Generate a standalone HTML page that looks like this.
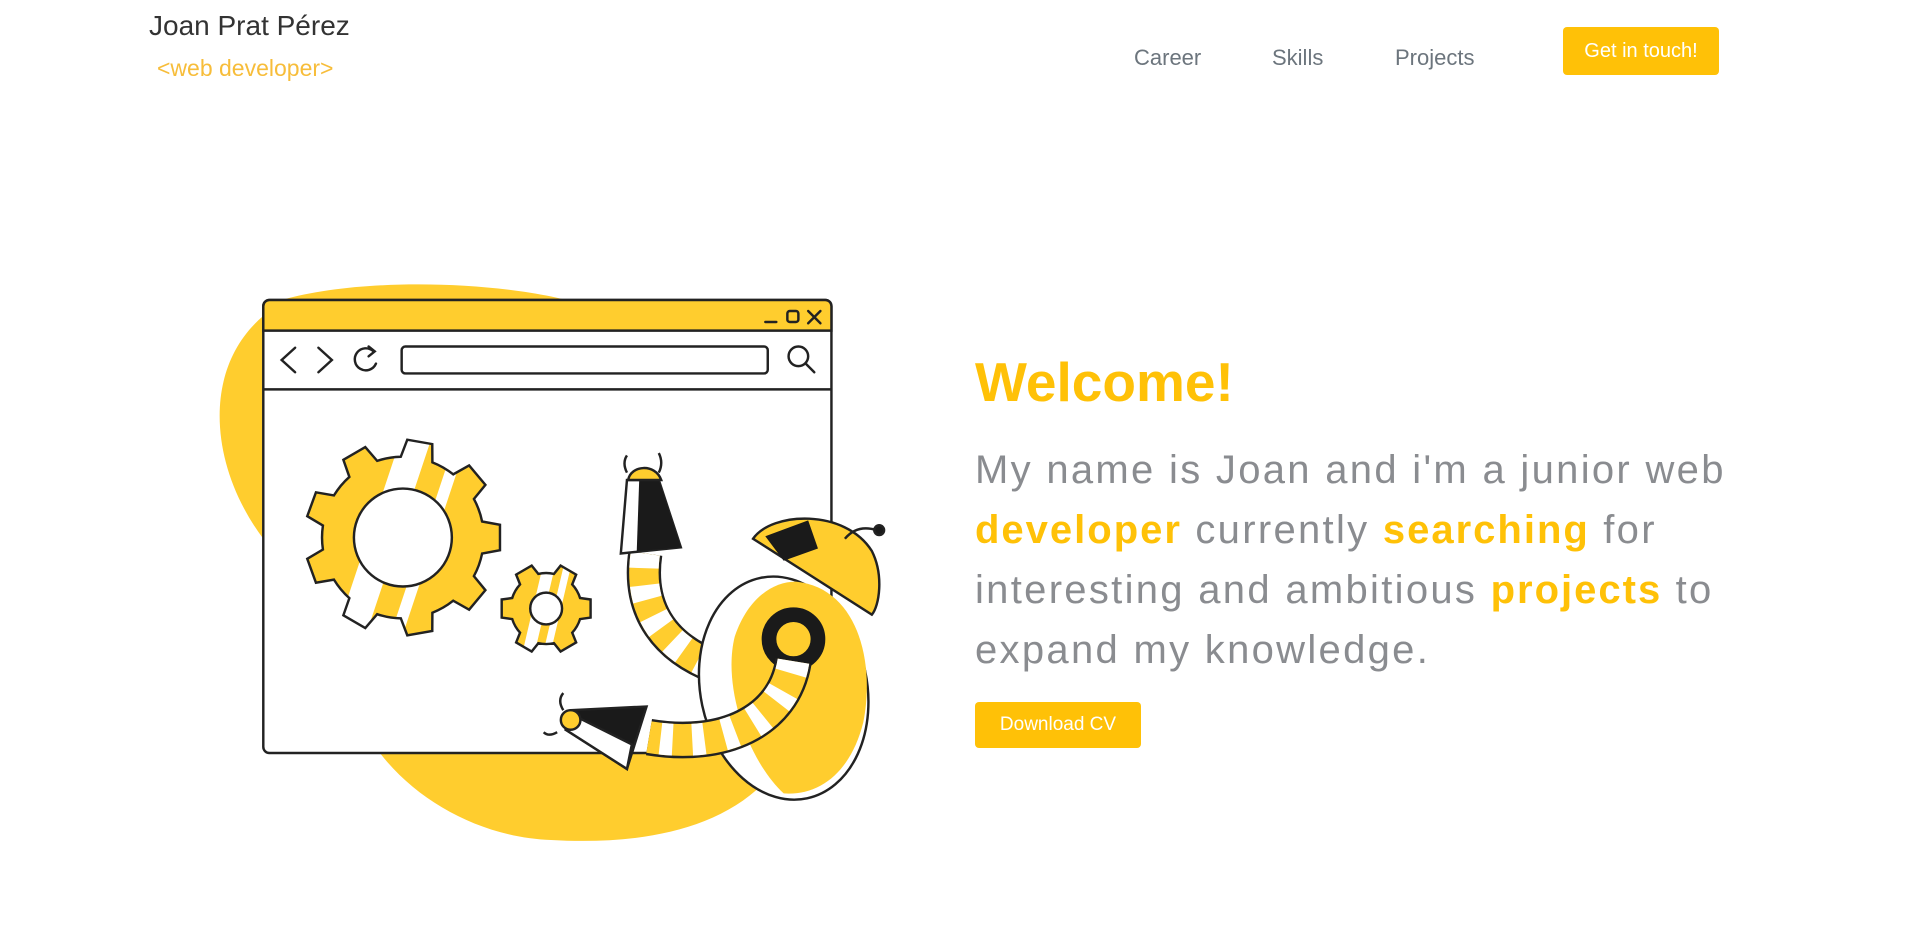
<!DOCTYPE html>
<html><head><meta charset="utf-8">
<style>
html,body{margin:0;padding:0;width:1920px;height:940px;background:#fff;overflow:hidden;font-family:"Liberation Sans",sans-serif;position:relative}
.a{position:absolute;white-space:nowrap}
.nav{color:#6c757d;font-size:22px;top:45px}
.btn{background:#FFC107;color:#fff;border-radius:4px;text-align:center}
.p{left:975px;font-size:40px;color:#8a8c90;letter-spacing:2.3px;line-height:60px}
.y{color:#FFC107;font-weight:bold;letter-spacing:2px}
</style></head><body>
<div class="a" style="left:149px;top:10px;font-size:28px;color:#333">Joan Prat Pérez</div>
<div class="a" style="left:157px;top:55px;font-size:23px;color:#f7bd3a">&lt;web developer&gt;</div>
<div class="a nav" style="left:1134px">Career</div>
<div class="a nav" style="left:1272px">Skills</div>
<div class="a nav" style="left:1395px">Projects</div>
<div class="a btn" style="left:1563px;top:27px;width:156px;height:48px;line-height:48px;font-size:20px">Get in touch!</div>

<div class="a" style="left:975px;top:350px;font-size:55px;font-weight:bold;color:#FFC107">Welcome!</div>
<div class="a p" style="top:440px">My name is Joan and i'm a junior web</div>
<div class="a p" style="top:500px"><span class="y">developer</span> currently <span class="y">searching</span> for</div>
<div class="a p" style="top:560px">interesting and ambitious <span class="y">projects</span> to</div>
<div class="a p" style="top:620px">expand my knowledge.</div>
<div class="a btn" style="left:975px;top:702px;width:166px;height:46px;line-height:46px;font-size:19px">Download CV</div>

<svg class="a" style="left:0;top:0" width="1920" height="940" viewBox="0 0 1568 767.7" xmlns="http://www.w3.org/2000/svg">
<defs>
<clipPath id="c1"><path id="g1p"/></clipPath>
<clipPath id="c2"><path id="g2p"/></clipPath>
</defs>
<path fill="#FFCD2E" d="M230 245 C300 225 420 230 480 250 L600 400 L640 620 C600 680 520 690 450 686 C390 684 330 650 300 600 L215 440 C170 380 165 300 215 258 Z"/>
<rect x="215" y="245" width="464" height="370" rx="5" fill="#fff" stroke="#222" stroke-width="2"/>
<path d="M215 270 V250 a5 5 0 0 1 5 -5 H674 a5 5 0 0 1 5 5 V270 Z" fill="#FFCD2E" stroke="#222" stroke-width="2"/>
<line x1="215" y1="318" x2="679" y2="318" stroke="#222" stroke-width="2"/>
<g stroke="#222" stroke-width="2" fill="none" stroke-linecap="round">
<line x1="625" y1="263" x2="634" y2="263"/>
<rect x="643" y="254" width="9" height="9" rx="2"/>
<path d="M660 254 L670 264 M670 254 L660 264"/>
<path d="M241 284 L230 294 L241 304"/>
<path d="M260 284 L271 294 L260 304"/>
<path d="M305 287 A9 9 0 1 0 307 297"/><path d="M301 283 L306 287 L301 291"/>
<rect x="328" y="283" width="299" height="22" rx="3"/>
<circle cx="652" cy="291" r="8"/><line x1="658" y1="297" x2="665" y2="304"/>
</g>
<g>
<path id="g1" fill="#FFCD2E" stroke="none"/>
<g clip-path="url(#c1)" fill="#fff"><polygon points="330,350 355,350 295,530 270,530"/><polygon points="375,350 385,350 325,530 315,530"/></g>
<path id="g1s" fill="none" stroke="#222" stroke-width="2"/>
<circle cx="329" cy="439" r="40" fill="#fff" stroke="#222" stroke-width="2"/>
</g>
<g>
<path id="g2" fill="#FFCD2E" stroke="none"/>
<g clip-path="url(#c2)" fill="#fff"><polygon points="445,455 455,455 435,540 425,540"/><polygon points="462,455 468,455 448,540 442,540"/></g>
<path id="g2s" fill="none" stroke="#222" stroke-width="2"/>
<circle cx="446" cy="497" r="13" fill="#fff" stroke="#222" stroke-width="2"/>
</g>
<g stroke="#222" stroke-width="2">
<path d="M527 452 C520 500 545 530 585 545" fill="none" stroke="#222" stroke-width="28"/>
<path d="M527 452 C520 500 545 530 585 545" fill="none" style="stroke:#FFCD2E" stroke-width="24"/>
<path d="M527 452 C520 500 545 530 585 545" fill="none" style="stroke:#fff" stroke-width="24" stroke-dasharray="12 14"/>
<ellipse cx="640" cy="562" rx="68" ry="92" transform="rotate(-12 640 562)" fill="#fff"/>
<path d="M650 475 C700 480 715 540 705 590 C695 630 670 650 640 648 C610 620 590 560 600 520 C610 490 630 475 650 475 Z" fill="#FFCD2E" stroke="none"/>
<circle cx="648" cy="522" r="20" fill="none" stroke="#1a1a1a" stroke-width="12"/>
<path d="M648 540 C640 590 590 612 530 602" fill="none" stroke="#222" stroke-width="30"/>
<path d="M648 540 C640 590 590 612 530 602" fill="none" style="stroke:#FFCD2E" stroke-width="26"/>
<path d="M648 540 C640 590 590 612 530 602" fill="none" style="stroke:#fff" stroke-width="26" stroke-dasharray="10 16"/>
<path d="M615 440 C630 418 690 415 712 450 C722 470 718 495 712 502 Z" fill="#FFCD2E"/>
<path d="M625 438 L660 425 L668 448 L640 458 Z" fill="#1a1a1a" stroke="none"/>
<path d="M690 440 Q700 428 716 433" fill="none"/>
<circle cx="718" cy="433" r="4" fill="#1a1a1a"/>
<path d="M512 392 L538 392 L556 447 L507 452 Z" fill="#fff"/>
<path d="M522 392 L538 392 L556 447 L520 450 Z" fill="#1a1a1a" stroke="none"/>
<path d="M513 392 C515 380 535 378 540 392 Z" fill="#FFCD2E"/>
<path d="M512 386 Q508 378 512 372 M538 386 Q542 378 538 370" fill="none"/>
<path d="M466 580 L528 577 L512 628 L462 596 Z" fill="#1a1a1a"/>
<path d="M462 596 L512 628 L516 608 L470 585 Z" fill="#fff"/>
<circle cx="466" cy="588" r="8" fill="#FFCD2E"/>
<path d="M460 580 Q455 572 460 566 M455 598 Q448 602 444 598" fill="none"/>
</g>
</svg>
<script>
function gear(cx,cy,n,ro,ri,tw,bw){var d='';for(var i=0;i<n;i++){var a=i*2*Math.PI/n;var pts=[[ri,a-bw],[ro,a-tw],[ro,a+tw],[ri,a+bw]];pts.forEach(function(p,j){var x=cx+p[0]*Math.cos(p[1]),y=cy+p[0]*Math.sin(p[1]);d+=(i==0&&j==0?'M':'L')+x.toFixed(1)+' '+y.toFixed(1)+' ';});var a2=(i+1)*2*Math.PI/n-bw;d+='A'+ri+' '+ri+' 0 0 1 '+(cx+ri*Math.cos(a2)).toFixed(1)+' '+(cy+ri*Math.sin(a2)).toFixed(1)+' ';}return d+'Z';}
var g1=gear(329,439,9,80,66,0.13,0.2),g2=gear(446,497,6,37,29,0.2,0.3);
['g1','g1s','g1p'].forEach(function(i){document.getElementById(i).setAttribute('d',g1)});
['g2','g2s','g2p'].forEach(function(i){document.getElementById(i).setAttribute('d',g2)});
</script>
</body></html>
